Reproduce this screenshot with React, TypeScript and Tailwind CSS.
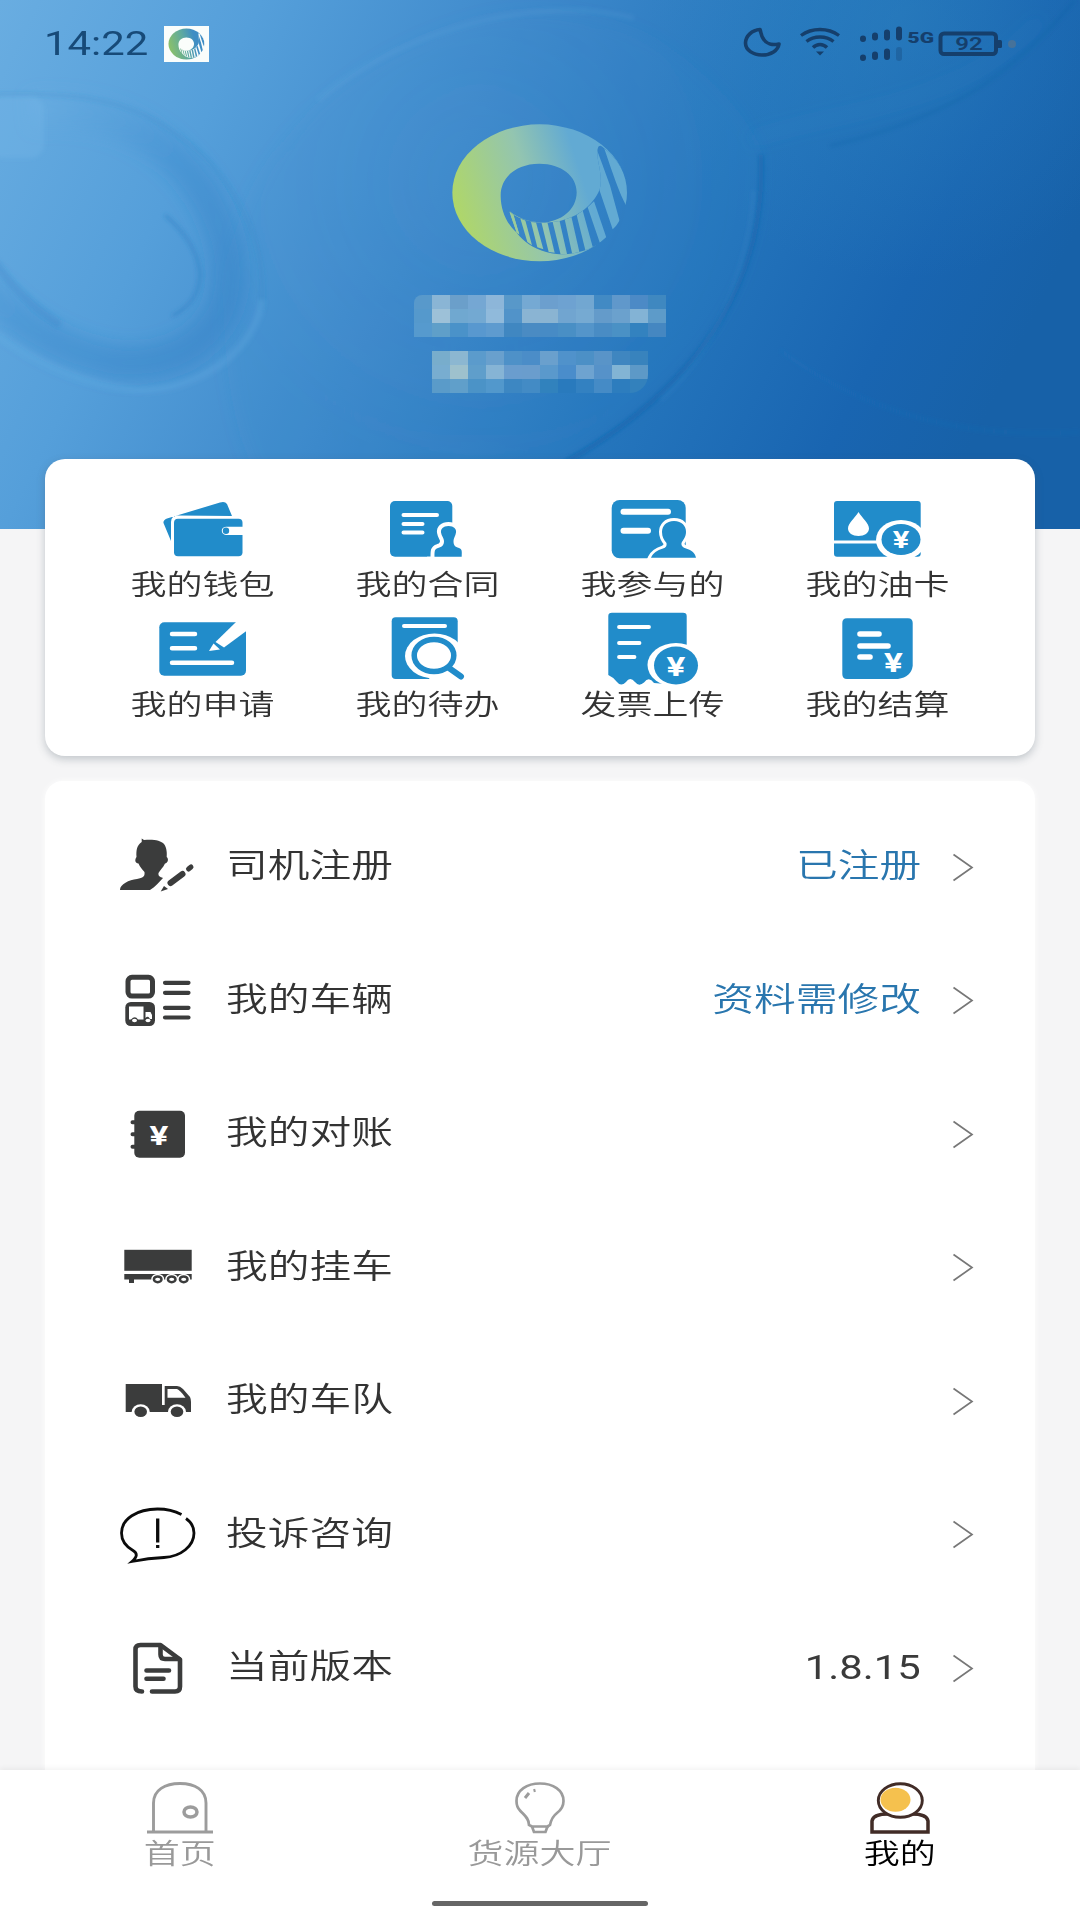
import type { ReactNode } from 'react'
import { clsx } from 'clsx'

const FONT = "font-[Roboto,'Noto_Sans_CJK_SC',sans-serif]"

interface YenProps {
  x: number
  y: number
  size: number
  color?: string
}

function Yen({ x, y, size, color = '#fff' }: YenProps) {
  return (
    <text
      transform={`translate(${x} ${y}) scale(1.35 1)`}
      textAnchor="middle"
      fontFamily="Roboto, sans-serif"
      fontWeight="700"
      fontSize={size}
      fill={color}
    >
      ¥
    </text>
  )
}

/* ---------- logo ---------- */

interface LogoProps {
  id: string
  className: string
  from: string
  mid: string
  to: string
}

function Logo({ id, className, from, mid, to }: LogoProps) {
  const crescent =
    'M322 328 C330 385 375 450 470 460 C560 470 670 405 690 310 C690 230 655 175 606 138 C588 128 590 165 598 200 C604 235 606 262 590 285 C560 335 500 368 425 366 C380 364 345 350 322 328 Z'
  const bars = [
    'M328 333 L340 343 L358 402 L350 396 Z',
    'M361 354 L376 360 L396 434 L382 424 Z',
    'M393 364 L408 366 L430 446 L412 440 Z',
    'M424 364 L442 364 L464 456 L446 454 Z',
    'M458 364 L478 358 L502 464 L482 462 Z',
    'M494 356 L514 348 L540 462 L518 466 Z',
    'M530 343 L548 330 L580 446 L558 456 Z',
    'M563 320 L582 302 L620 414 L600 428 Z',
    'M575 110 C592 150 612 205 630 255 L660 366 L638 386 L598 268 L585 200 Z',
    'M613 145 C660 170 700 240 681 320 C656 275 636 212 613 145 Z',
  ]
  return (
    <svg viewBox="150 65 540 425" preserveAspectRatio="none" className={className}>
      <defs>
        <linearGradient id={`${id}-fill`} x1="0" y1="0.6" x2="1" y2="0.35">
          <stop offset="0" stopColor={from} />
          <stop offset="0.45" stopColor={mid} />
          <stop offset="0.75" stopColor={to} />
          <stop offset="1" stopColor={to} />
        </linearGradient>
        <clipPath id={`${id}-clip`}>
          <path d={crescent} />
        </clipPath>
        <mask id={`${id}-mask`} maskUnits="userSpaceOnUse" x="150" y="65" width="540" height="425">
          <rect x="150" y="65" width="540" height="425" fill="#fff" />
          <path d={crescent} fill="#000" />
          <g clipPath={`url(#${id}-clip)`}>
            {bars.map((d) => (
              <path key={d} d={d} fill="#fff" />
            ))}
          </g>
          <path d="M302 285 C302 230 350 190 418 190 C485 190 530 228 530 275 C530 328 482 364 425 366 C385 364 352 352 330 333 C334 360 340 378 350 396 C320 370 302 330 302 285 Z" fill="#000" />
          <path d="M328 333 L341 345 L358 402 L350 396 Z" fill="#fff" />
        </mask>
      </defs>
      <ellipse cx="419" cy="277" rx="262" ry="205" fill={`url(#${id}-fill)`} mask={`url(#${id}-mask)`} />
    </svg>
  )
}

/* ---------- header ---------- */

function HeaderBackdrop() {
  return (
    <svg viewBox="0 0 1080 529" className="absolute inset-0 h-full w-full" aria-hidden="true">
      <defs>
        <linearGradient id="sky" gradientUnits="userSpaceOnUse" x1="0" y1="0" x2="960" y2="470">
          <stop offset="0" stopColor="#69ade1" />
          <stop offset="0.22" stopColor="#559fda" />
          <stop offset="0.45" stopColor="#3e89cb" />
          <stop offset="0.68" stopColor="#2576bd" />
          <stop offset="0.88" stopColor="#1965b1" />
          <stop offset="1" stopColor="#1761a8" />
        </linearGradient>
        <linearGradient id="tube" x1="0" y1="0" x2="1" y2="1">
          <stop offset="0" stopColor="#7fbdea" stopOpacity="0.3" />
          <stop offset="0.5" stopColor="#2f80c6" stopOpacity="0.3" />
          <stop offset="1" stopColor="#2a78bf" stopOpacity="0.35" />
        </linearGradient>
        <radialGradient id="globe" gradientUnits="userSpaceOnUse" cx="480" cy="180" r="285">
          <stop offset="0" stopColor="#4a94d1" stopOpacity="0.2" />
          <stop offset="0.85" stopColor="#3a88ca" stopOpacity="0.12" />
          <stop offset="1" stopColor="#3a88ca" stopOpacity="0.14" />
        </radialGradient>
        <radialGradient id="glow" gradientUnits="userSpaceOnUse" cx="900" cy="20" r="260">
          <stop offset="0" stopColor="#2f86c0" stopOpacity="0.4" />
          <stop offset="1" stopColor="#2f86c0" stopOpacity="0" />
        </radialGradient>
        <filter id="soft" x="-20%" y="-20%" width="140%" height="140%">
          <feGaussianBlur stdDeviation="8" />
        </filter>
        <filter id="thin" x="-20%" y="-20%" width="140%" height="140%">
          <feGaussianBlur stdDeviation="2" />
        </filter>
      </defs>
      <rect width="1080" height="529" fill="url(#sky)" />
      <rect width="1080" height="529" fill="url(#glow)" />
      <path d="M225 300 C225 430 260 500 300 529 L560 460 C700 380 765 280 760 155 C700 20 560 0 480 20 C330 60 225 180 225 300 Z" fill="url(#globe)" filter="url(#soft)" />
      <path d="M30 112 C150 100 225 190 228 270 C230 340 170 368 115 362 C60 352 20 325 -20 285" fill="none" stroke="url(#tube)" strokeWidth="34" filter="url(#soft)" />
      <path d="M-10 95 C60 92 120 95 170 130 C240 175 268 250 262 310" fill="none" stroke="#2f82c5" strokeOpacity="0.25" strokeWidth="3" filter="url(#thin)" />
      <path d="M262 300 C255 350 200 392 135 390 C70 384 20 352 -10 330" fill="none" stroke="#6db4e6" strokeOpacity="0.22" strokeWidth="7" filter="url(#thin)" />
      <path d="M165 215 C188 235 199 255 200 275 C199 295 190 307 172 316" fill="none" stroke="#2b7cc2" strokeOpacity="0.5" strokeWidth="3" filter="url(#thin)" />
      <path d="M-5 262 C10 285 30 305 60 325" fill="none" stroke="#2b7cc2" strokeOpacity="0.25" strokeWidth="8" filter="url(#thin)" />
      <rect x="-10" y="96" width="54" height="62" rx="14" fill="#7cbaea" fillOpacity="0.25" filter="url(#thin)" />
      <path d="M761 155 C766 270 711 380 566 462" fill="none" stroke="#155fa9" strokeOpacity="0.6" strokeWidth="4" filter="url(#thin)" />
      <path d="M754 190 C750 275 710 355 660 400" fill="none" stroke="#4b9ad8" strokeOpacity="0.14" strokeWidth="5" filter="url(#thin)" />
      <path d="M318 100 C380 45 520 -10 634 18" fill="none" stroke="#79b7e6" strokeOpacity="0.14" strokeWidth="4" filter="url(#thin)" />
      <path d="M1075 0 C1010 80 940 120 830 146" fill="none" stroke="#175f9f" strokeOpacity="0.25" strokeWidth="3" filter="url(#thin)" />
      <path d="M750 140 C830 110 960 110 1040 20" fill="none" stroke="#4b9ad0" strokeOpacity="0.1" strokeWidth="10" filter="url(#soft)" />
      <path d="M780 350 C860 410 960 440 1080 432" fill="none" stroke="#2d7cc0" strokeOpacity="0.18" strokeWidth="3" filter="url(#thin)" />
    </svg>
  )
}

function StatusBar() {
  return (
    <div className="relative flex h-[90px] items-center pl-[44px] text-[#174a78]">
      <div className="relative -top-px w-[120px] text-[33.500px] leading-none">
        <span className="inline-block origin-left scale-x-125">14:22</span>
      </div>
      <div className="relative -top-px flex h-9 w-[45px] items-center justify-center bg-[#fafdfb]">
        <Logo id="badge" className="h-8 w-[37px]" from="#8cc168" mid="#5da9a0" to="#3f8dc4" />
      </div>
      <svg viewBox="0 0 290 50" className="ml-[526px] h-[50px] w-[290px]" fill="none" stroke="#153f6c">
        <path d="M25 9.500 C17 10 10.500 16 10.500 23 C10.500 30 18 35 27 35 C36 35 43 30.500 44 24 C37 25.500 31 23.500 28.500 19 C26 16 26 12 25 9.500 Z" strokeWidth="3.600" strokeLinejoin="round" />
        <path d="M66 15.500 C77 7.500 93 7.500 104 15.500" strokeWidth="3.400" />
        <path d="M71.500 21.500 C79 15.500 91 15.500 98.500 21.500" strokeWidth="3.400" />
        <path d="M78 27.500 C82 23.500 88 23.500 92 27.500" strokeWidth="3.400" />
        <path d="M81 31.500 L89 31.500 L85 35.500 Z" fill="#153f6c" stroke="none" />
        <g strokeWidth="6" strokeLinecap="round">
          <path d="M128 18.500 V19 M140 15.500 V17.500 M152 12.500 V17.500 M164 9.500 V17.500" />
          <path d="M128 37.500 V38 M140 34.500 V37 M152 31.500 V37" />
          <path d="M164 30 V38" strokeOpacity="0.3" />
        </g>
        <text transform="translate(172.500 23) scale(1.5 1)" fontFamily="Roboto, sans-serif" fontWeight="900" fontSize="14" fill="#153f6c" stroke="none">5G</text>
        <rect x="205.500" y="13.500" width="55.500" height="20.500" rx="3.500" strokeWidth="4" />
        <text transform="translate(234 30) scale(1.3 1)" textAnchor="middle" fontFamily="Roboto, sans-serif" fontWeight="600" fontSize="18.500" fill="#153f6c" stroke="none">92</text>
        <rect x="262" y="20" width="5" height="8" rx="1.500" fill="#153f6c" stroke="none" />
        <ellipse cx="277" cy="24" rx="4" ry="4" fill="#5f7587" fillOpacity="0.6" stroke="none" />
      </svg>
    </div>
  )
}

// Pixelated name and phone number
const NAME_ROWS = [
  ['#5899cb', '#8ab5d5', '#6b9fca', '#75a7d3', '#8db6d9', '#5898c9', '#75a9d3', '#6c9fce', '#6ea2d1', '#72a7d1', '#428ac4', '#6098cb', '#4c8ac6', '#3f88c0'],
  ['#5599cc', '#9dc1d8', '#70a8d0', '#73a9d2', '#90badb', '#5193c9', '#8ab4d3', '#8ab4d2', '#71a5d0', '#76aad2', '#649bca', '#6ba1cd', '#83b3d5', '#5d9bc9'],
  ['#569ace', '#5f9fc9', '#4a92c9', '#5898cf', '#5e9bcf', '#4087c1', '#4a8bc3', '#478bc5', '#498fc5', '#5495ca', '#498cc4', '#4a91c5', '#3382bf', '#4587c1'],
]
const PHONE_ROWS = [
  ['#78adcc', '#8cb7d1', '#5b9bcc', '#69a0cd', '#4e91c8', '#4b8dc8', '#6aa0cd', '#5092cb', '#4c90c6', '#5994c8', '#3f86c0', '#3883bd'],
  ['#78add0', '#9ec1cd', '#5f9ecb', '#86b4d5', '#6a9dce', '#6a9dcd', '#5a99cc', '#4a8dcb', '#6ea3d0', '#5692c9', '#82b4d4', '#5d99c7'],
  ['#5a9bc9', '#609fca', '#4b93c7', '#5298cc', '#3d87c2', '#438bc5', '#3182bd', '#297abd', '#3381c1', '#458bc6', '#2d7dbe', '#3381bc'],
]

interface MosaicProps {
  rows: string[][]
  className?: string
}

function Mosaic({ rows, className }: MosaicProps) {
  return (
    <div className={clsx('overflow-hidden', className)}>
      {rows.map((row, i) => (
        <div key={i} className="flex">
          {row.map((color, j) => (
            <div key={j} className="h-3.5 w-[18px]" style={{ backgroundColor: color }} />
          ))}
        </div>
      ))}
    </div>
  )
}

/* ---------- shortcut grid icons ---------- */

const shortcuts: { label: string; icon: ReactNode }[] = [
  {
    label: '我的钱包',
    icon: (
      <>
        <path d="M11.500 29 Q11 26 15 24.500 L68 8.500 Q73 7 75 10 L80 22 L26 21.500 Q19 21.500 19 28 V47 Z" />
        <rect x="22" y="24.800" width="68.500" height="37.500" rx="4" />
        <path d="M91 32.700 H74 A5 4.200 0 0 0 74 41 H91 Z" fill="#fff" />
        <circle cx="74" cy="36.800" r="3.200" />
      </>
    ),
  },
  {
    label: '我的合同',
    icon: (
      <>
        <rect x="13" y="7" width="62.300" height="55.700" rx="5" />
        <path d="M26.500 21 H60 M26.500 30 H45.500 M26.500 38.500 H45.500" stroke="#fff" strokeWidth="4" strokeLinecap="round" />
        <path d="M71.500 32 C77 32 79.500 35 79 38.500 C78.500 42 76.500 44 76.500 47 C76.500 51 78 53 82 54 C85 55 85 57 85 62.700 H57.500 C57.500 57 57.500 55 61 54 C65 53 67 51 67 47 C67 44 64.500 42 64 38.500 C63.500 35 66 32 71.500 32 Z" stroke="#fff" strokeWidth="8" />
        <rect x="50" y="62.700" width="40" height="6" fill="#fff" />
        <path d="M71.500 32 C77 32 79.500 35 79 38.500 C78.500 42 76.500 44 76.500 47 C76.500 51 78 53 82 54 C85 55 85 57 84.700 62.700 H57.500 C57.500 57 57.500 55 61 54 C65 53 67 51 67 47 C67 44 64.500 42 64 38.500 C63.500 35 66 32 71.500 32 Z" />
      </>
    ),
  },
  {
    label: '我参与的',
    icon: (
      <>
        <rect x="9.700" y="6" width="74" height="58.300" rx="8" />
        <path d="M21.500 17.700 H66 M21.500 36.700 H46" stroke="#fff" strokeWidth="6" strokeLinecap="round" />
        <path d="M72 27 C80 27 84 32 84 38 C84 43 81 46 79.500 49 C79 52 81 53.500 84 54.500 C90 56.500 93 59 94 63.500 H49 C51 59 55 56.500 61 54.500 C64 53.500 65 52 64.500 49 C62 46 60 43 60 38 C60 32 64 27 72 27 Z" stroke="#fff" strokeWidth="6" />
        <rect x="46" y="63.800" width="54" height="5" fill="#fff" />
        <path d="M72 27 C80 27 84 32 84 38 C84 43 81 46 79.500 49 C79 52 81 53.500 84 54.500 C90 56.500 93 59 94 63.800 H49 C51 59 55 56.500 61 54.500 C64 53.500 65 52 64.500 49 C62 46 60 43 60 38 C60 32 64 27 72 27 Z" />
      </>
    ),
  },
  {
    label: '我的油卡',
    icon: (
      <>
        <rect x="7" y="7" width="86.700" height="55.700" rx="3" />
        <path d="M7 48 H56" stroke="#fff" strokeWidth="3" />
        <path d="M31.500 18 C35 24 42 29 42 34.500 C42 39 37.500 42 31.500 42 C25.500 42 21 39 21 34.500 C21 29 28 24 31.500 18 Z" fill="#fff" />
        <ellipse cx="74" cy="46" rx="25" ry="20" fill="#fff" />
        <ellipse cx="74" cy="45.500" rx="19.500" ry="15.500" />
        <Yen x={74} y={54} size={23} />
      </>
    ),
  },
  {
    label: '我的申请',
    icon: (
      <>
        <rect x="7.300" y="8.300" width="86.700" height="53.400" rx="5" />
        <path d="M20 20 H43 M20 34.300 H43 M20 48.700 H80" stroke="#fff" strokeWidth="4.500" strokeLinecap="round" />
        <path d="M63.500 28 L84 8 H95 V16.500 L72 33.500 Z" fill="#fff" />
        <path d="M61.500 29.500 L57 37 L68 35.500 Z" fill="#fff" />
      </>
    ),
  },
  {
    label: '我的待办',
    icon: (
      <>
        <rect x="14.700" y="3.300" width="66" height="61.700" rx="4" />
        <path d="M27 12 H68" stroke="#fff" strokeWidth="4" strokeLinecap="round" />
        <ellipse cx="57.500" cy="42" rx="29.500" ry="22.500" fill="#fff" />
        <path d="M52 64.500 L70 56 L95 50 L95 70 L52 70 Z" fill="#fff" />
        <ellipse cx="57" cy="41.500" rx="19.800" ry="16" fill="#fff" stroke="#218cca" strokeWidth="5.500" />
        <path d="M72 54 L84 62.500" stroke="#218cca" strokeWidth="6" strokeLinecap="round" />
      </>
    ),
  },
  {
    label: '发票上传',
    icon: (
      <>
        <path d="M6.300 2 Q6.300 -1.300 10 -1.300 H81 Q84.700 -1.300 84.700 2 V69 L58 69.500 L52 69 Q47 62 42 68.500 Q37 73 33 68 Q28 62 24 68 Q19 73 15 68 Q11 63 6.300 61 Z" />
        <path d="M17 13 H47 M17 29 H37.500 M17 43 H32.500" stroke="#fff" strokeWidth="3.800" strokeLinecap="round" />
        <ellipse cx="74" cy="51" rx="28.500" ry="22" fill="#fff" />
        <ellipse cx="74" cy="51.500" rx="22" ry="19" />
        <Yen x={74} y={61.500} size={26} />
      </>
    ),
  },
  {
    label: '我的结算',
    icon: (
      <>
        <path d="M20 4.300 H81 Q85.700 4.300 85.700 9 V52 Q84 63 71 65 H20 Q15.300 65 15.300 60 V9 Q15.300 4.300 20 4.300 Z" />
        <path d="M33 20 H52 M33 32 H61 M33 43 H43" stroke="#fff" strokeWidth="5.600" strokeLinecap="round" />
        <Yen x={66.500} y={57.500} size={26} />
      </>
    ),
  },
]

/* ---------- menu icons ---------- */

const truckWheel = (cx: number) => (
  <g>
    <ellipse cx={cx} cy="41.700" rx="9" ry="7.500" fill="#fff" />
    <ellipse cx={cx} cy="41.700" rx="6.300" ry="5.300" />
  </g>
)

const menu: { label: string; value?: string; plain?: boolean; icon: ReactNode }[] = [
  {
    label: '司机注册',
    value: '已注册',
    icon: (
      <>
        <path d="M24.700 2.500 L27 4 C35 3 44 4 47 8 C50 12 50 18 49.700 21 C52 23 51 27 48 27.500 C46 32 43 34 41.500 37 C41 40 43 41 46 42 C42 46 38 51 33 54 H3 C3 48 12 44 20 43 C26 41.500 28 41 27.500 36 C25 33 23 31 21.500 27.500 C18 27 17.500 24 19.500 21 C19 14 20 9 24.700 6 Z" />
        <path d="M53.500 47 L65.500 38" stroke="#3b3c3c" strokeWidth="6" strokeLinecap="round" />
        <path d="M71.500 33 L74 31" stroke="#3b3c3c" strokeWidth="5" strokeLinecap="round" />
        <path d="M43.700 55.500 L47 50 L51 53 Z" />
      </>
    ),
  },
  {
    label: '我的车辆',
    value: '资料需修改',
    icon: (
      <>
        <rect x="11" y="8.300" width="24.500" height="18.800" rx="4" fill="none" stroke="#3b3c3c" strokeWidth="5" />
        <rect x="8.300" y="33" width="29.700" height="24" rx="5.500" />
        <path d="M12 37.500 H26.500 V50.500 H21 Q18 46 14 50.500 H12 Z M28.500 43 H33.500 L35 46 V50 H33 Q31 46 28.500 49 Z" fill="#fff" />
        <ellipse cx="17.500" cy="51.500" rx="2.500" ry="1.800" fill="#fff" />
        <ellipse cx="31" cy="51.500" rx="2.500" ry="1.800" fill="#fff" />
        <path d="M48 13.800 H71.500 M48 38.800 H71.500 M48 48.500 H71.500 M48 23.800 H71.500" stroke="#3b3c3c" strokeWidth="4.200" strokeLinecap="round" />
      </>
    ),
  },
  {
    label: '我的对账',
    icon: (
      <>
        <rect x="17.300" y="7.700" width="50.700" height="47" rx="5" />
        <path d="M15.500 19.300 H20 M15.500 31.300 H20 M15.500 43.700 H20" stroke="#3b3c3c" strokeWidth="4" strokeLinecap="round" />
        <Yen x={42} y={41.500} size={26} />
      </>
    ),
  },
  {
    label: '我的挂车',
    icon: (
      <>
        <rect x="7.300" y="13.800" width="67.400" height="21" />
        <path d="M7.300 38 H74.700 V43.500 H17 V47 H12 V43.500 H7.300 Z" />
        {[40.700, 54.700, 66.700].map((cx) => (
          <g key={cx}>
            <ellipse cx={cx} cy="43" rx="6.500" ry="5.200" fill="#fff" />
            <ellipse cx={cx} cy="43.300" rx="3.800" ry="2.900" fill="#fff" stroke="#3b3c3c" strokeWidth="2.500" />
          </g>
        ))}
      </>
    ),
  },
  {
    label: '我的车队',
    icon: (
      <>
        <path d="M8.700 14 H45 V35 H47.700 V16 H60 Q63 16 66 19 L73 27 Q74 29 74 32 V42 H8.700 Z" />
        <path d="M50.500 19 H60 Q63 20 68.500 27.700 H50.500 Z" fill="#fff" />
        {truckWheel(23.700)}
        {truckWheel(60)}
      </>
    ),
  },
  {
    label: '投诉咨询',
    icon: (
      <g fill="none" stroke="#0b0b0b" strokeWidth="2.800">
        <path d="M64.500 11.500 C57 7.500 49 6 40.500 6 C20 6 4.500 16 4.500 30 C4.500 38 9 43.500 16 47.500 C21 50.500 20 54 15 58.500 C25 56.500 36 55 47 54.500 C64 53.500 77 43 77 30 C77 24 74 19 69 15.500" />
        <path d="M40.700 15.500 V39.500 M40.700 42 V45" strokeWidth="3.300" />
      </g>
    ),
  },
  {
    label: '当前版本',
    value: '1.8.15',
    plain: true,
    icon: (
      <g fill="none" stroke="#3b3c3c" strokeWidth="4.600" strokeLinecap="round" strokeLinejoin="round">
        <path d="M25 54.500 Q18.500 54.500 18.500 49.500 V12.500 Q18.500 8 23.500 8 H43.500 L63 22.500 V49.500 Q63 54.500 58 54.500 H35" />
        <path d="M43.500 9 V17.500 Q43.500 22 48 22 H62" />
        <path d="M29.500 33.500 H52 M29.500 41.700 H46.500" />
      </g>
    ),
  },
]

const tabs: { label: string; active?: boolean; icon: ReactNode }[] = [
  {
    label: '首页',
    icon: (
      <g stroke="#9c9c9c" strokeWidth="2.900" fill="none">
        <path d="M13.500 50 V21 C13.500 8 25 1.500 40 1.500 C55 1.500 66 8 66 21 V50 M7 50 H73" />
        <ellipse cx="50.500" cy="30" rx="6.500" ry="5" strokeWidth="3.500" />
      </g>
    ),
  },
  {
    label: '货源大厅',
    icon: (
      <g stroke="#9c9c9c" strokeWidth="2.700" fill="none">
        <path d="M34 50 L32 44.500 L29 43 C29 36 24 33 20 28.500 C17.500 26 16.500 22 16.500 19 C16.500 8 27 1.500 40 1.500 C53 1.500 63.500 8 63.500 19 C63.500 24 61 28 57 31 C53 34 51 38 50 43 L47.500 44.500 L45.500 50 Z M31 44.500 H49" />
        <path d="M25 16 L29 11 M33.500 8.700 L35.500 8.200" strokeWidth="3" />
      </g>
    ),
  },
  {
    label: '我的',
    active: true,
    icon: (
      <g stroke="#412c27" strokeWidth="3.500" fill="none">
        <path d="M12 50 V39 C13 33 20 32 28 32 H52 C60 32 67 33 68 39 V50 Z" fill="#fff" />
        <ellipse cx="40.300" cy="18.500" rx="22" ry="16.800" fill="#fff" strokeWidth="2.900" />
        <ellipse cx="35.500" cy="17.700" rx="15" ry="12" fill="#f5c14e" stroke="none" />
      </g>
    ),
  },
]

export default function App() {
  return (
    <div className={clsx('relative flex h-[1920px] w-[1080px] flex-col overflow-hidden bg-[#f5f5f6] text-[#333]', FONT)}>
      <header className="relative h-[529px] shrink-0 bg-[#3b88c9]">
        <HeaderBackdrop />
        <StatusBar />
        <div className="relative flex flex-col items-center pt-8">
          <Logo id="avatar" className="h-[142px] w-[180px]" from="#b0d767" mid="#93c5b0" to="#62aad3" />
          <Mosaic rows={NAME_ROWS} className="mt-[31px] rounded-tl-lg" />
          <Mosaic rows={PHONE_ROWS} className="mt-3.5 rounded-br-[18px]" />
        </div>
      </header>

      <main className="relative -mt-[70px] flex flex-1 flex-col px-[45px]">
        <section className="grid h-[297px] shrink-0 grid-cols-4 content-start rounded-[20px] bg-white px-[45px] pt-[35px] shadow-[0_3px_9px_rgba(70,85,100,0.3)]">
          {shortcuts.map(({ label, icon }) => (
            <div key={label} className="flex h-[119.500px] flex-col items-center">
              <svg viewBox="0 0 101 72" className="h-[72px] w-[101px] shrink-0 overflow-visible" fill="#218cca">
                {icon}
              </svg>
              <span className="mt-1 scale-x-125 text-[28.800px] leading-[30px] font-[350] whitespace-nowrap">{label}</span>
            </div>
          ))}
        </section>

        <section className="mt-[25px] flex-1 rounded-t-[18px] bg-white pt-[18px] pr-[61px] pl-[72px] shadow-[0_0_6px_rgba(255,255,255,0.900)]">
          {menu.map(({ label, value, plain, icon }) => (
            <div key={label} className="flex h-[133.500px] items-center">
              <svg viewBox="0 0 80 60" className="h-[60px] w-20 shrink-0 overflow-visible" fill="#3b3c3c">
                {icon}
              </svg>
              <span className="ml-[29px] origin-left scale-x-125 text-[33.400px] leading-none font-[350]">{label}</span>
              {value && (
                <span
                  className={clsx(
                    'ml-auto origin-right scale-x-125 text-[33.400px] leading-none whitespace-nowrap',
                    plain ? 'pt-px text-[#3a3a3a]' : 'font-[350] text-[#2976ae]',
                  )}
                >
                  {value}
                </span>
              )}
              <svg viewBox="0 0 22 32" className={clsx('h-8 w-[22px] shrink-0', value ? 'ml-[31px]' : 'ml-auto')}>
                <path d="M1.500 4.500 L20 17.500 L1.500 30.500" fill="none" stroke="#777" strokeWidth="1.700" />
              </svg>
            </div>
          ))}
        </section>
      </main>

      <nav className="relative h-[150px] shrink-0 bg-white shadow-[0_-2px_5px_rgba(0,0,0,0.050)]">
        <div className="grid grid-cols-3 pt-3">
          {tabs.map(({ label, active, icon }) => (
            <div key={label} className={clsx('flex flex-col items-center', active ? 'text-black' : 'text-[#999]')}>
              <svg viewBox="0 0 80 52" className="h-[52px] w-20">
                {icon}
              </svg>
              <span className="mt-[5px] scale-x-125 text-[28.800px] leading-[30px] font-[350] whitespace-nowrap">{label}</span>
            </div>
          ))}
        </div>
        <div className="mx-auto mt-8 h-[5px] w-[216px] rounded-full bg-[#666]" />
      </nav>
    </div>
  )
}
